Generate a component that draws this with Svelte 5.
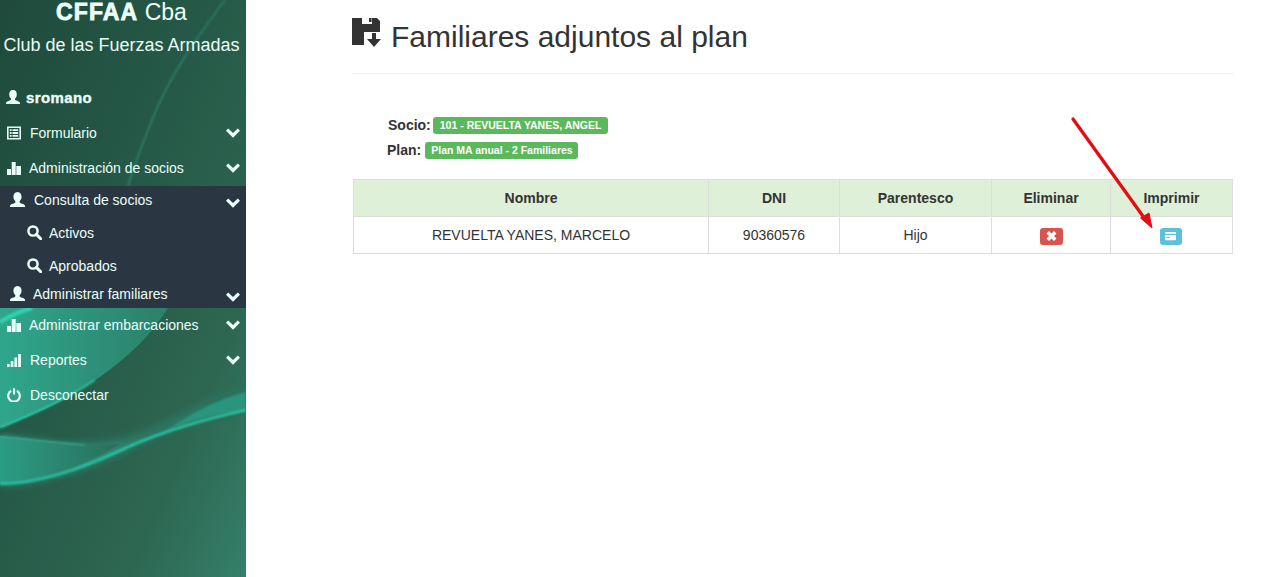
<script lang="ts">
	type Item = { label: string; icon: string; chevron?: boolean };

	const icons: Record<string, string> = {
		user: 'M7 0C9.700 0 10.800 2 10.800 4.500 10.800 6.300 10 7.800 9 8.600V9.800C9 10.600 13.500 11 14 12.800V14H0V12.800C.5 11 5 10.600 5 9.800V8.600C4 7.800 3.200 6.300 3.200 4.500 3.200 2 4.300 0 7 0z',
		list: 'M0 .5h14v13H0zM1.600 2.100v9.800h10.800V2.100zM2.800 3.300h1.800v1.800H2.800zM5.500 3.300h5.700v1.800H5.500zM2.800 6.100h1.800v1.800H2.800zM5.500 6.100h5.700v1.800H5.500zM2.800 8.900h1.800v1.800H2.800zM5.500 8.900h5.700v1.800H5.500z',
		stats: 'M0 8h4v6H0zM4.700 1h4v13h-4zM9.300 5H14v9H9.300z',
		signal: 'M0 11h2.700v3H0zM3.700 8h2.700v6H3.700zM7.400 4.500h2.700V14H7.400zM11.100 1h2.900v13h-2.900z'
	};

	const before: Item[] = [
		{ label: 'Formulario', icon: 'list', chevron: true },
		{ label: 'Administración de socios', icon: 'stats', chevron: true }
	];
	const after: Item[] = [
		{ label: 'Administrar embarcaciones', icon: 'stats', chevron: true },
		{ label: 'Reportes', icon: 'signal', chevron: true }
	];
</script>

{#snippet chevron()}
	<svg class="chev" viewBox="0 0 14 10" aria-hidden="true">
		<path d="M2.200 .4 7 5 11.800 .4 14 2.700 7 9.800 0 2.700z" fill="currentColor" />
	</svg>
{/snippet}

{#snippet userIcon()}
	<svg class="ico" viewBox="0 0 14 14" aria-hidden="true"><path d={icons.user} fill="currentColor" /></svg>
{/snippet}

{#snippet searchIcon()}
	<svg class="ico search" viewBox="0 0 14 14" aria-hidden="true">
		<circle cx="5.600" cy="5.600" r="4.300" fill="none" stroke="currentColor" stroke-width="2.300" />
		<path d="M8.800 8.800 12.800 12.800" stroke="currentColor" stroke-width="2.800" stroke-linecap="round" />
	</svg>
{/snippet}

<div class="page">
	<aside class="sidebar">
		<svg class="waves" viewBox="0 0 246 577" preserveAspectRatio="none" aria-hidden="true">
			<defs>
				<linearGradient id="base" x1="0" y1="0" x2="1" y2="1">
					<stop offset="0" stop-color="#1f4a3b" />
					<stop offset="0.45" stop-color="#265a48" />
					<stop offset="0.75" stop-color="#2d6651" />
					<stop offset="1" stop-color="#34806a" />
				</linearGradient>
				<linearGradient id="upper" x1="0" y1="0" x2="1" y2="0">
					<stop offset="0" stop-color="#2fa68c" />
					<stop offset="1" stop-color="#2c7f68" />
				</linearGradient>
				<linearGradient id="lower" x1="0" y1="0" x2="1" y2="0">
					<stop offset="0" stop-color="#2c9c84" />
					<stop offset="1" stop-color="#2a6f5a" />
				</linearGradient>
				<filter id="soft"><feGaussianBlur stdDeviation="0.800" /></filter>
				<filter id="softer"><feGaussianBlur stdDeviation="4" /></filter>
			</defs>
			<rect width="246" height="577" fill="url(#base)" />
			<path d="M0 300C60 300 130 290 172 300 150 345 90 395 0 428z" fill="url(#upper)" />
			<path d="M0 436C60 444 90 448 130 438 170 425 210 395 246 385V408C200 416 170 428 130 448 90 468 50 482 0 484z" fill="url(#lower)" filter="url(#softer)" />
			<path d="M0 436C60 442 90 446 120 444 90 462 50 482 0 484z" fill="url(#lower)" />
			<path d="M165 431C190 414 220 398 246 392V410C215 414 190 421 165 431z" fill="#2ba88e" opacity="0.65" filter="url(#soft)" />
			<g filter="url(#soft)" fill="none">
				<path d="M0 484C50 483 100 460 130 446 167 430 200 420 246 410" stroke="#27c9a8" stroke-width="2.500" />
				<path d="M0 428C30 415 70 398 95 380" stroke="#2ccfae" stroke-width="1.800" opacity="0.8" />
				<path d="M0 436C30 439 60 443 85 445" stroke="#3fbfa4" stroke-width="0.800" />
				<path d="M0 322C10 316 20 311 32 308" stroke="#2fd6b4" stroke-width="4" />
				<path d="M225 0C195 40 170 75 152 120 142 145 134 165 128 186" stroke="#2f8f76" stroke-width="1.200" />
			</g>
		</svg>

		<div class="brand">
			<div class="brand-top"><strong>CFFAA</strong> Cba</div>
			<div class="brand-sub">Club de las Fuerzas Armadas</div>
		</div>

		<div class="who">
			{@render userIcon()}
			<span>sromano</span>
		</div>

		<nav>
			{#each before as item}
				<div class="row">
					<svg class="ico" viewBox="0 0 14 14" aria-hidden="true"><path d={icons[item.icon]} fill="currentColor" fill-rule="evenodd" /></svg>
					<span class={item.icon === 'list' ? 'wide' : ''}>{item.label}</span>
					{#if item.chevron}{@render chevron()}{/if}
				</div>
			{/each}

			<div class="sub">
				<div class="sub-head first">
					{@render userIcon()}
					<span>Consulta de socios</span>
					{@render chevron()}
				</div>
				<div class="sub-link">{@render searchIcon()}<span>Activos</span></div>
				<div class="sub-link">{@render searchIcon()}<span>Aprobados</span></div>
				<div class="sub-head last">
					{@render userIcon()}
					<span>Administrar familiares</span>
					{@render chevron()}
				</div>
			</div>

			{#each after as item}
				<div class="row">
					<svg class="ico" viewBox="0 0 14 14" aria-hidden="true"><path d={icons[item.icon]} fill="currentColor" /></svg>
					<span class={item.icon === 'signal' ? 'wide' : ''}>{item.label}</span>
					{#if item.chevron}{@render chevron()}{/if}
				</div>
			{/each}

			<div class="row">
				<svg class="ico" viewBox="0 0 14 14" aria-hidden="true">
					<path d="M4.200 2.800a5.800 5.800 0 1 0 5.600 0" fill="none" stroke="currentColor" stroke-width="2.200" />
					<path d="M7 .3v6.200" stroke="currentColor" stroke-width="2.200" />
				</svg>
				<span class="wide">Desconectar</span>
			</div>
		</nav>
	</aside>

	<main class="content">
		<header class="title">
			<svg class="save" viewBox="0 0 30 30" aria-hidden="true">
				<path d="M0 0h10v6h10V0h5l3 3v11H12v13H0z" fill="#333" />
				<path d="M17 0h2.500v4H17z" fill="#333" />
				<path d="M20 15h4v6h5l-7 8-7-8h5z" fill="#333" />
			</svg>
			<h1>Familiares adjuntos al plan</h1>
		</header>

		<div class="info">
			<div class="info-row socio"><b>Socio:</b><span class="badge">101 - REVUELTA YANES, ANGEL</span></div>
			<div class="info-row plan"><b>Plan:</b><span class="badge">Plan MA anual - 2 Familiares</span></div>
		</div>

		<table>
			<thead>
				<tr>
					<th class="c-name">Nombre</th>
					<th class="c-dni">DNI</th>
					<th class="c-rel">Parentesco</th>
					<th class="c-del">Eliminar</th>
					<th>Imprimir</th>
				</tr>
			</thead>
			<tbody>
				<tr>
					<td>REVUELTA YANES, MARCELO</td>
					<td>90360576</td>
					<td>Hijo</td>
					<td>
						<button class="btn red" aria-label="Eliminar">
							<svg viewBox="0 0 10 10" aria-hidden="true"><path d="M2.500 0 5 2.500 7.500 0 10 2.500 7.500 5 10 7.500 7.500 10 5 7.500 2.500 10 0 7.500 2.500 5 0 2.500z" fill="#fff" /></svg>
						</button>
					</td>
					<td>
						<button class="btn blue" aria-label="Imprimir">
							<svg viewBox="0 0 12 10" aria-hidden="true"><path d="M1 .5h10a1 1 0 0 1 1 1v7a1 1 0 0 1-1 1H1a1 1 0 0 1-1-1v-7a1 1 0 0 1 1-1zM0 2.500V4h12V2.500zM1.500 6v1.200h3.500V6z" fill="#fff" fill-rule="evenodd" /></svg>
						</button>
					</td>
				</tr>
			</tbody>
		</table>

		<svg class="arrow" viewBox="0 0 100 125" aria-hidden="true">
			<path d="M5 3 77 103" stroke="#e60b10" stroke-width="3.300" stroke-linecap="round" />
			<path d="M84 112 72.500 102 81 97z" fill="#e60b10" stroke="#e60b10" stroke-width="1" />
		</svg>
	</main>
</div>

<style>
	:global(body) {
		margin: 0;
		background: #fff;
	}
	.page {
		display: flex;
		height: 577px;
		overflow: hidden;
		font-family: 'Liberation Sans', Arial, sans-serif;
		font-size: 14px;
		color: #333;
	}
	.sidebar {
		position: relative;
		flex: 0 0 246px;
		color: #eafff9;
		overflow: hidden;
	}
	.waves {
		position: absolute;
		inset: 0;
		width: 100%;
		height: 100%;
	}
	.brand,
	.who,
	nav {
		position: relative;
	}
	.brand {
		text-align: center;
		padding-right: 3px;
	}
	.brand-top {
		height: 26px;
		line-height: 25px;
		font-size: 23px;
	}
	.brand-top strong {
		letter-spacing: 1.100px;
		-webkit-text-stroke: 0.8px currentColor;
	}
	.brand-sub {
		margin-top: 9px;
		height: 20px;
		line-height: 20px;
		font-size: 18px;
		white-space: nowrap;
	}
	.who {
		display: flex;
		align-items: center;
		gap: 6px;
		height: 20px;
		margin-top: 32px;
		padding-left: 6px;
		font-size: 15px;
		font-weight: bold;
	}
	.who span {
		letter-spacing: 0.4px;
		-webkit-text-stroke: 0.4px currentColor;
	}
	.ico {
		flex: none;
		width: 14px;
		height: 14px;
	}
	.ico.search {
		width: 15px;
		height: 15px;
	}
	nav {
		margin-top: 8px;
	}
	.row {
		display: flex;
		align-items: center;
		height: 35px;
		padding-left: 7px;
		gap: 8px;
	}
	.row span.wide {
		margin-left: 1px;
	}
	.chev {
		width: 14px;
		height: 10px;
		margin-left: auto;
		margin-right: 6px;
		flex: none;
	}
	.sub {
		height: 122px;
		background: #2a3742;
		position: relative;
		margin-top: 1px;
		margin-bottom: -1px;
	}
	.sub-head {
		display: flex;
		align-items: center;
		height: 28px;
		padding-left: 10px;
		gap: 9px;
	}
	.sub-head .ico {
		width: 15px;
		height: 15px;
		margin-top: -2px;
	}
	.sub-head.first {
		margin-bottom: 2px;
	}
	.sub-head.last {
		margin-top: -2px;
		gap: 8px;
	}
	.sub-head .chev {
		margin-top: 5px;
	}
	.sub-link {
		display: flex;
		align-items: center;
		height: 33px;
		padding-left: 27px;
		gap: 7px;
	}
	.content {
		position: relative;
		flex: 1;
		margin: 0 43px 0 106px;
		min-width: 0;
	}
	.title {
		display: flex;
		align-items: center;
		gap: 9px;
		border-bottom: 1px solid #eee;
		box-sizing: border-box;
		height: 74px;
	}
	.save {
		width: 30px;
		height: 30px;
		margin-top: -8px;
		flex: none;
	}
	h1 {
		margin: 0;
		font-size: 30px;
		font-weight: normal;
		line-height: 33px;
		color: #333;
	}
	.info {
		margin-top: 39px;
		padding-left: 36px;
	}
	.info-row {
		display: flex;
		align-items: center;
		gap: 4px;
		height: 25px;
	}
	.info-row.plan {
		margin-left: -1px;
	}
	.info-row b {
		margin-top: -2px;
	}
	.badge {
		display: block;
		background: #5cb85c;
		color: #fff;
		font-size: 10.500px;
		font-weight: bold;
		line-height: 17px;
		height: 17px;
		padding: 0 5.500px 0 6px;
		border-radius: 3px;
		white-space: nowrap;
	}
	.socio {
		gap: 2px;
	}
	.socio .badge {
		padding: 0 7px;
	}
	table {
		width: 880px;
		margin: 16px 0 0 1px;
		border-collapse: collapse;
		table-layout: fixed;
	}
	th,
	td {
		border: 1px solid #ddd;
		text-align: center;
		height: 37px;
		padding: 0;
		box-sizing: border-box;
	}
	th {
		background: #dff0d8;
		font-weight: bold;
	}
	.c-name {
		width: 355px;
	}
	.c-dni {
		width: 131px;
	}
	.c-rel {
		width: 152px;
	}
	.c-del {
		width: 119px;
	}
	.btn {
		display: inline-flex;
		align-items: center;
		justify-content: center;
		width: 23px;
		height: 17px;
		margin-top: 2px;
		padding: 0;
		border: 0;
		border-radius: 3px;
		vertical-align: middle;
	}
	.btn svg {
		width: 11px;
		height: 10px;
	}
	.red {
		background: #d9534f;
	}
	.blue {
		background: #5bc0de;
		width: 22px;
		margin-right: 2px;
	}
	.arrow {
		position: absolute;
		left: 716px;
		top: 116px;
		width: 100px;
		height: 125px;
	}
</style>
